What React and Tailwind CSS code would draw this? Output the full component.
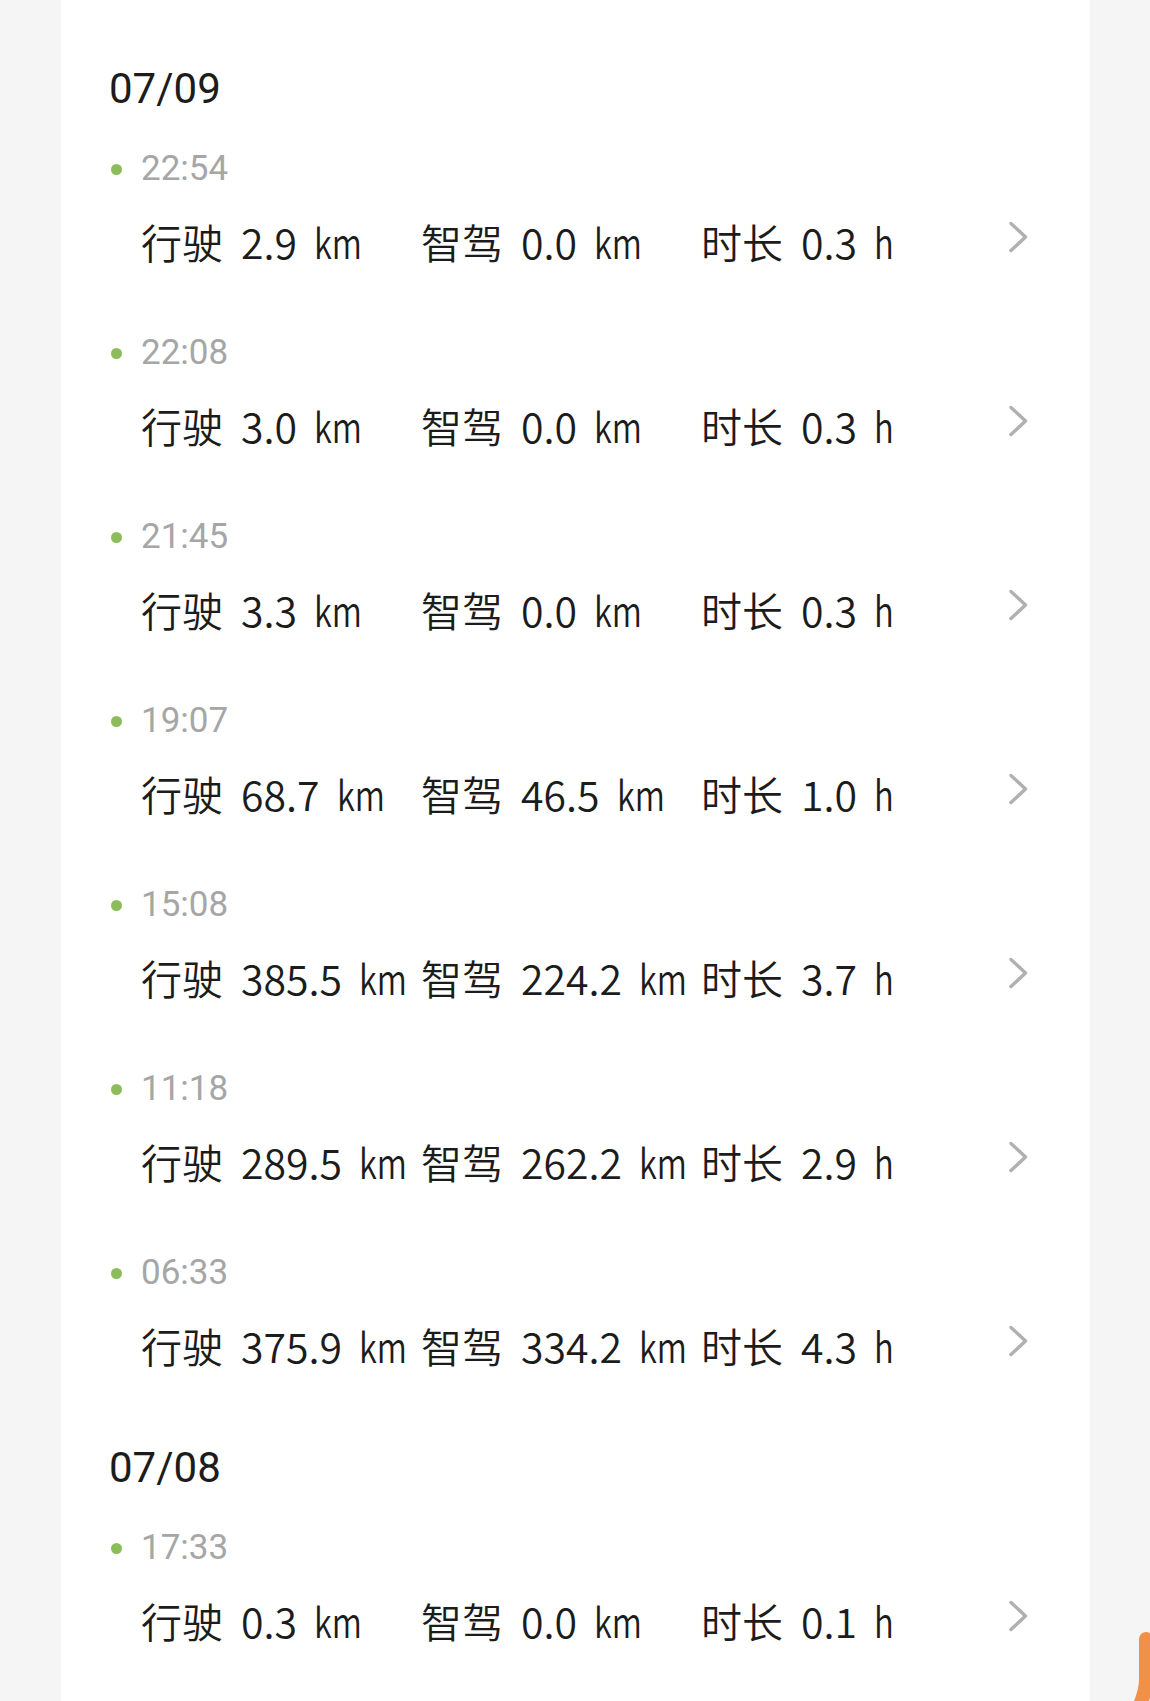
import React from 'react';

const days = [
  {
    date: '07/09',
    trips: [
      { time: '22:54', drive: '2.9', smart: '0.0', hours: '0.3' },
      { time: '22:08', drive: '3.0', smart: '0.0', hours: '0.3' },
      { time: '21:45', drive: '3.3', smart: '0.0', hours: '0.3' },
      { time: '19:07', drive: '68.7', smart: '46.5', hours: '1.0' },
      { time: '15:08', drive: '385.5', smart: '224.2', hours: '3.7' },
      { time: '11:18', drive: '289.5', smart: '262.2', hours: '2.9' },
      { time: '06:33', drive: '375.9', smart: '334.2', hours: '4.3' },
    ],
  },
  {
    date: '07/08',
    trips: [{ time: '17:33', drive: '0.3', smart: '0.0', hours: '0.1' }],
  },
];

const cjk = { fontFamily: '"Noto Sans CJK SC", "Noto Sans", sans-serif' };
const roboto = { fontFamily: 'Roboto, "Noto Sans", sans-serif' };

function Stat({ label, value, unit }) {
  return (
    <span className="w-[280px] shrink-0 flex items-baseline">
      <span>{label}</span>
      <span className="ml-[18px]">{value}</span>
      <span className="ml-[17px] inline-block scale-x-[0.8] origin-left">{unit}</span>
    </span>
  );
}

function Chevron() {
  return (
    <svg width="20" height="32" viewBox="0 0 20 32" className="mb-[9px] shrink-0">
      <path d="M3 2.5 L17.5 16 L3 29.5" fill="none" stroke="#b0b0b0" strokeWidth="3.4" strokeLinecap="round" strokeLinejoin="round" />
    </svg>
  );
}

function Trip({ trip }) {
  return (
    <div className="pb-[54px]">
      <div className="h-[56px] flex items-center">
        <span className="w-[11px] h-[11px] rounded-full bg-[#8cbd5a] ml-[2px]" />
        <span className="ml-[19px] text-[35px] text-[#a6a6a6]" style={roboto}>
          {trip.time}
        </span>
      </div>
      <div className="h-[60px] mt-[14px] flex items-center text-[41px] font-[350] text-[#1c1c1c] leading-none" style={cjk}>
        <div className="ml-[32px] flex items-baseline">
          <Stat label="行驶" value={trip.drive} unit="km" />
          <Stat label="智驾" value={trip.smart} unit="km" />
          <Stat label="时长" value={trip.hours} unit="h" />
        </div>
        <div className="ml-auto">
          <Chevron />
        </div>
      </div>
    </div>
  );
}

export default function App() {
  return (
    <div className="relative h-[1701px] overflow-hidden bg-[#f5f5f5] pl-[61px]">
      <div className="w-[1029px] h-full bg-white pl-[48px] pr-[62px] pt-[60px]">
        {days.map((day, i) => (
          <div key={day.date} className={i > 0 ? 'mt-[10px]' : ''}>
            <div className="h-[56px] flex items-center mb-[25px] text-[42px] text-[#1c1c1c]" style={roboto}>
              {day.date}
            </div>
            {day.trips.map((t) => (
              <Trip key={t.time} trip={t} />
            ))}
          </div>
        ))}
      </div>

      {/* orange floating handle at the bottom right edge */}
      <svg width="20" height="70" viewBox="0 0 20 70" className="absolute right-0 bottom-0">
        <path d="M16 8 L16 49 Q16 59 10 74" fill="none" stroke="#f0914a" strokeWidth="14" strokeLinecap="round" />
      </svg>
    </div>
  );
}
